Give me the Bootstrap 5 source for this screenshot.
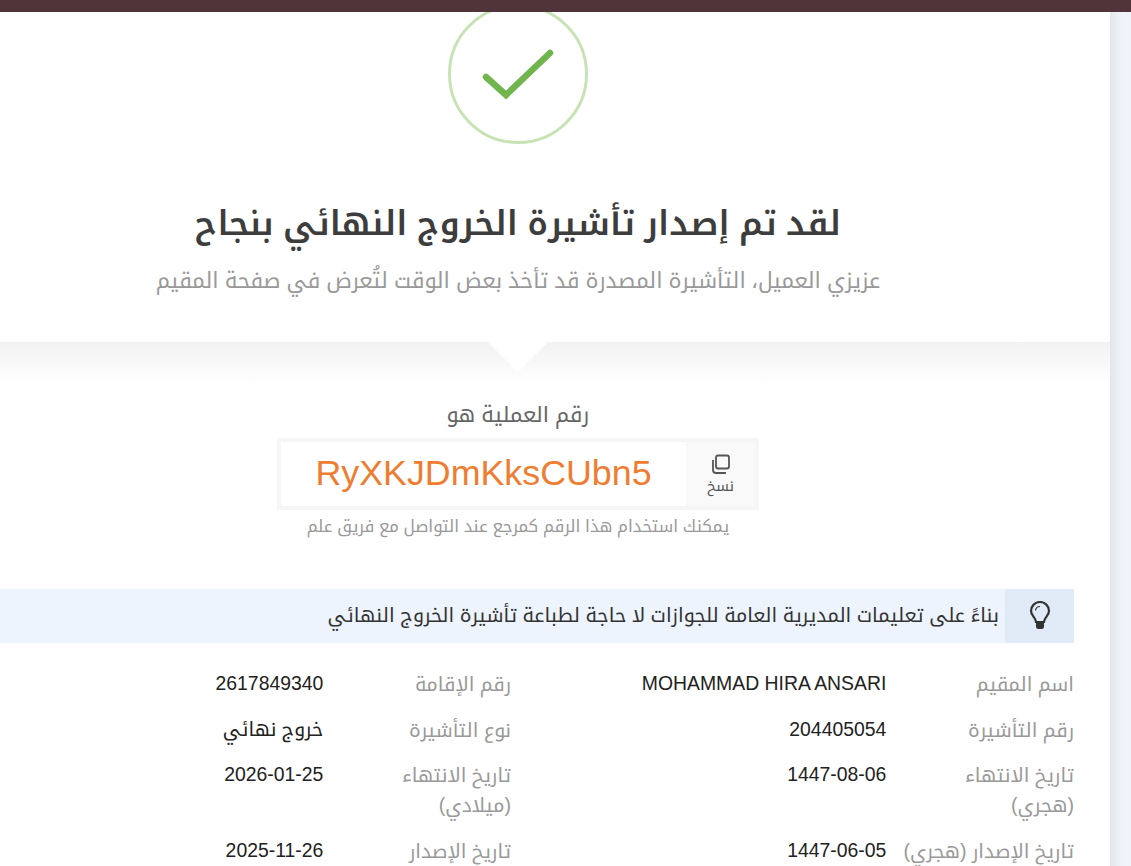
<!DOCTYPE html>
<html lang="ar" dir="rtl">
<head>
<meta charset="utf-8">
<title>تأشيرة الخروج النهائي</title>
<link rel="stylesheet" href="https://cdn.jsdelivr.net/npm/bootstrap@5.3.0/dist/css/bootstrap.min.css">
<style>
html,body{height:866px;overflow:hidden}
body{background:#f0f4fa;font-family:"Liberation Sans","Noto Kufi Arabic","DejaVu Sans",sans-serif;color:#222}
.topstrip{height:12px;background:#51343a;position:relative;z-index:2}
.pagewrap{height:854px;overflow:hidden}
.rail{width:21px;background:linear-gradient(to right,#e3e5ea,#f0f4fa 60%)}
.sheet{width:1110px;background:#fff;overflow:hidden}
.inner{margin-left:-38px;width:1112px}
.checkring{width:140px;height:140px;margin-top:-8px;border:3px solid #c7e3b5;border-radius:50%}
.checkring svg{width:76px;height:56px}
.headline{font-size:33.800px;font-weight:600;color:#3d3d3d;line-height:44px;margin:57px 0 0}
.subline{font-size:21.800px;color:#999;line-height:30px;margin:21px 0 0}
.bandarea{width:1148px;height:43px;margin-top:46px;margin-right:-36px;background:linear-gradient(to bottom,#f2f2f2,#fff);position:relative}
.notch{position:absolute;top:0;right:562px;width:0;height:0;border-left:30px solid transparent;border-right:30px solid transparent;border-top:30px solid #fff}
.reflabel{font-size:21.600px;color:#666;line-height:28px;margin:16px 0 9px}
.refbox{width:482px;height:72px;border:4px solid #f6f6f6}
.copycell{width:69px;background:#f9f9f9;color:#555;font-size:14.600px;line-height:16px}
.copycell svg{width:21px;height:21px;display:block;margin-bottom:3px}
.refcode{font-size:35.800px;color:#ef7d31;line-height:1}
.refnote{font-size:16.800px;color:#999;line-height:20px;margin:7px 0 0}
.infostrip{height:54px;background:#edf4fd;margin-top:52px;font-size:19.700px;color:#333}
.infotext{padding:0 6px}
.bulbcell{width:69px;background:#e1eaf7}
.bulbcell svg{width:24px;height:30px}
.facts{margin-left:-14px;margin-right:0;margin-top:26px;font-size:19.600px;line-height:30px}
.factline{padding-bottom:15.670px}
.factname{color:#999;padding-left:12px}
.factvalue{color:#222;line-height:28px;font-size:19.400px}
</style>
</head>
<body>
<div class="topstrip"></div>
<div class="pagewrap d-flex" dir="ltr">
<main class="sheet flex-shrink-0">
<div class="inner" dir="rtl">
<div class="text-center">
<div class="checkring d-inline-flex align-items-center justify-content-center">
<svg viewBox="0 0 76 56"><path d="M6 31 L26 49 L70 7" fill="none" stroke="#71b54e" stroke-width="6.500" stroke-linecap="round" stroke-linejoin="miter"/></svg>
</div>
<h1 class="headline">لقد تم إصدار تأشيرة الخروج النهائي بنجاح</h1>
<p class="subline">عزيزي العميل، التأشيرة المصدرة قد تأخذ بعض الوقت لتُعرض في صفحة المقيم</p>
</div>
<div class="bandarea"><div class="notch"></div></div>
<div class="text-center">
<div class="reflabel">رقم العملية هو</div>
<div class="refbox d-inline-flex" dir="ltr">
<div class="flex-grow-1 d-flex align-items-center justify-content-center refcode">RyXKJDmKksCUbn5</div>
<div class="copycell d-flex flex-column align-items-center justify-content-center">
<svg viewBox="0 0 21 21"><path d="M6 3.500q0-2 2-2h9q2 0 2 2v9q0 2-2 2H8q-2 0-2-2z" fill="none" stroke="#555" stroke-width="1.800"/><path d="M3 6v10q0 3 3 3h10" fill="none" stroke="#555" stroke-width="1.800"/></svg>
<span dir="rtl">نسخ</span>
</div>
</div>
<div class="refnote">يمكنك استخدام هذا الرقم كمرجع عند التواصل مع فريق علم</div>
</div>
<div class="infostrip d-flex align-items-center">
<div class="bulbcell h-100 d-flex align-items-center justify-content-center">
<svg viewBox="0 0 24 30"><path d="M8 21C7.500 16 3 14.500 3 10a9 9 0 0 1 18 0c0 4.500-4.500 6-5 11z" fill="none" stroke="#333" stroke-width="2.200"/><path d="M7.500 9.500a4.500 4.500 0 0 1 4.500-4" fill="none" stroke="#333" stroke-width="1.200"/><path d="M8 22h8v3.500q0 2.500-2.500 2.500h-3Q8 28 8 25.500z" fill="#333"/></svg>
</div>
<div class="infotext">بناءً على تعليمات المديرية العامة للجوازات لا حاجة لطباعة تأشيرة الخروج النهائي</div>
</div>
<div class="facts row g-0">
<div class="col-6">
<div class="row g-0 factline"><div class="col-4 factname">اسم المقيم</div><div class="col-8 factvalue">MOHAMMAD HIRA ANSARI</div></div>
<div class="row g-0 factline"><div class="col-4 factname">رقم التأشيرة</div><div class="col-8 factvalue">204405054</div></div>
<div class="row g-0 factline"><div class="col-4 factname">تاريخ الانتهاء (هجري)</div><div class="col-8 factvalue">1447-08-06</div></div>
<div class="row g-0 factline"><div class="col-4 factname">تاريخ الإصدار (هجري)</div><div class="col-8 factvalue">1447-06-05</div></div>
</div>
<div class="col-6">
<div class="row g-0 factline"><div class="col-4 factname">رقم الإقامة</div><div class="col-8 factvalue">2617849340</div></div>
<div class="row g-0 factline"><div class="col-4 factname">نوع التأشيرة</div><div class="col-8 factvalue">خروج نهائي</div></div>
<div class="row g-0 factline"><div class="col-4 factname">تاريخ الانتهاء (ميلادي)</div><div class="col-8 factvalue">2026-01-25</div></div>
<div class="row g-0 factline"><div class="col-4 factname">تاريخ الإصدار</div><div class="col-8 factvalue">2025-11-26</div></div>
</div>
</div>
</div>
</main>
<div class="rail"></div>
</div>
<script src="https://cdn.jsdelivr.net/npm/bootstrap@5.3.0/dist/js/bootstrap.bundle.min.js"></script>
</body>
</html>
